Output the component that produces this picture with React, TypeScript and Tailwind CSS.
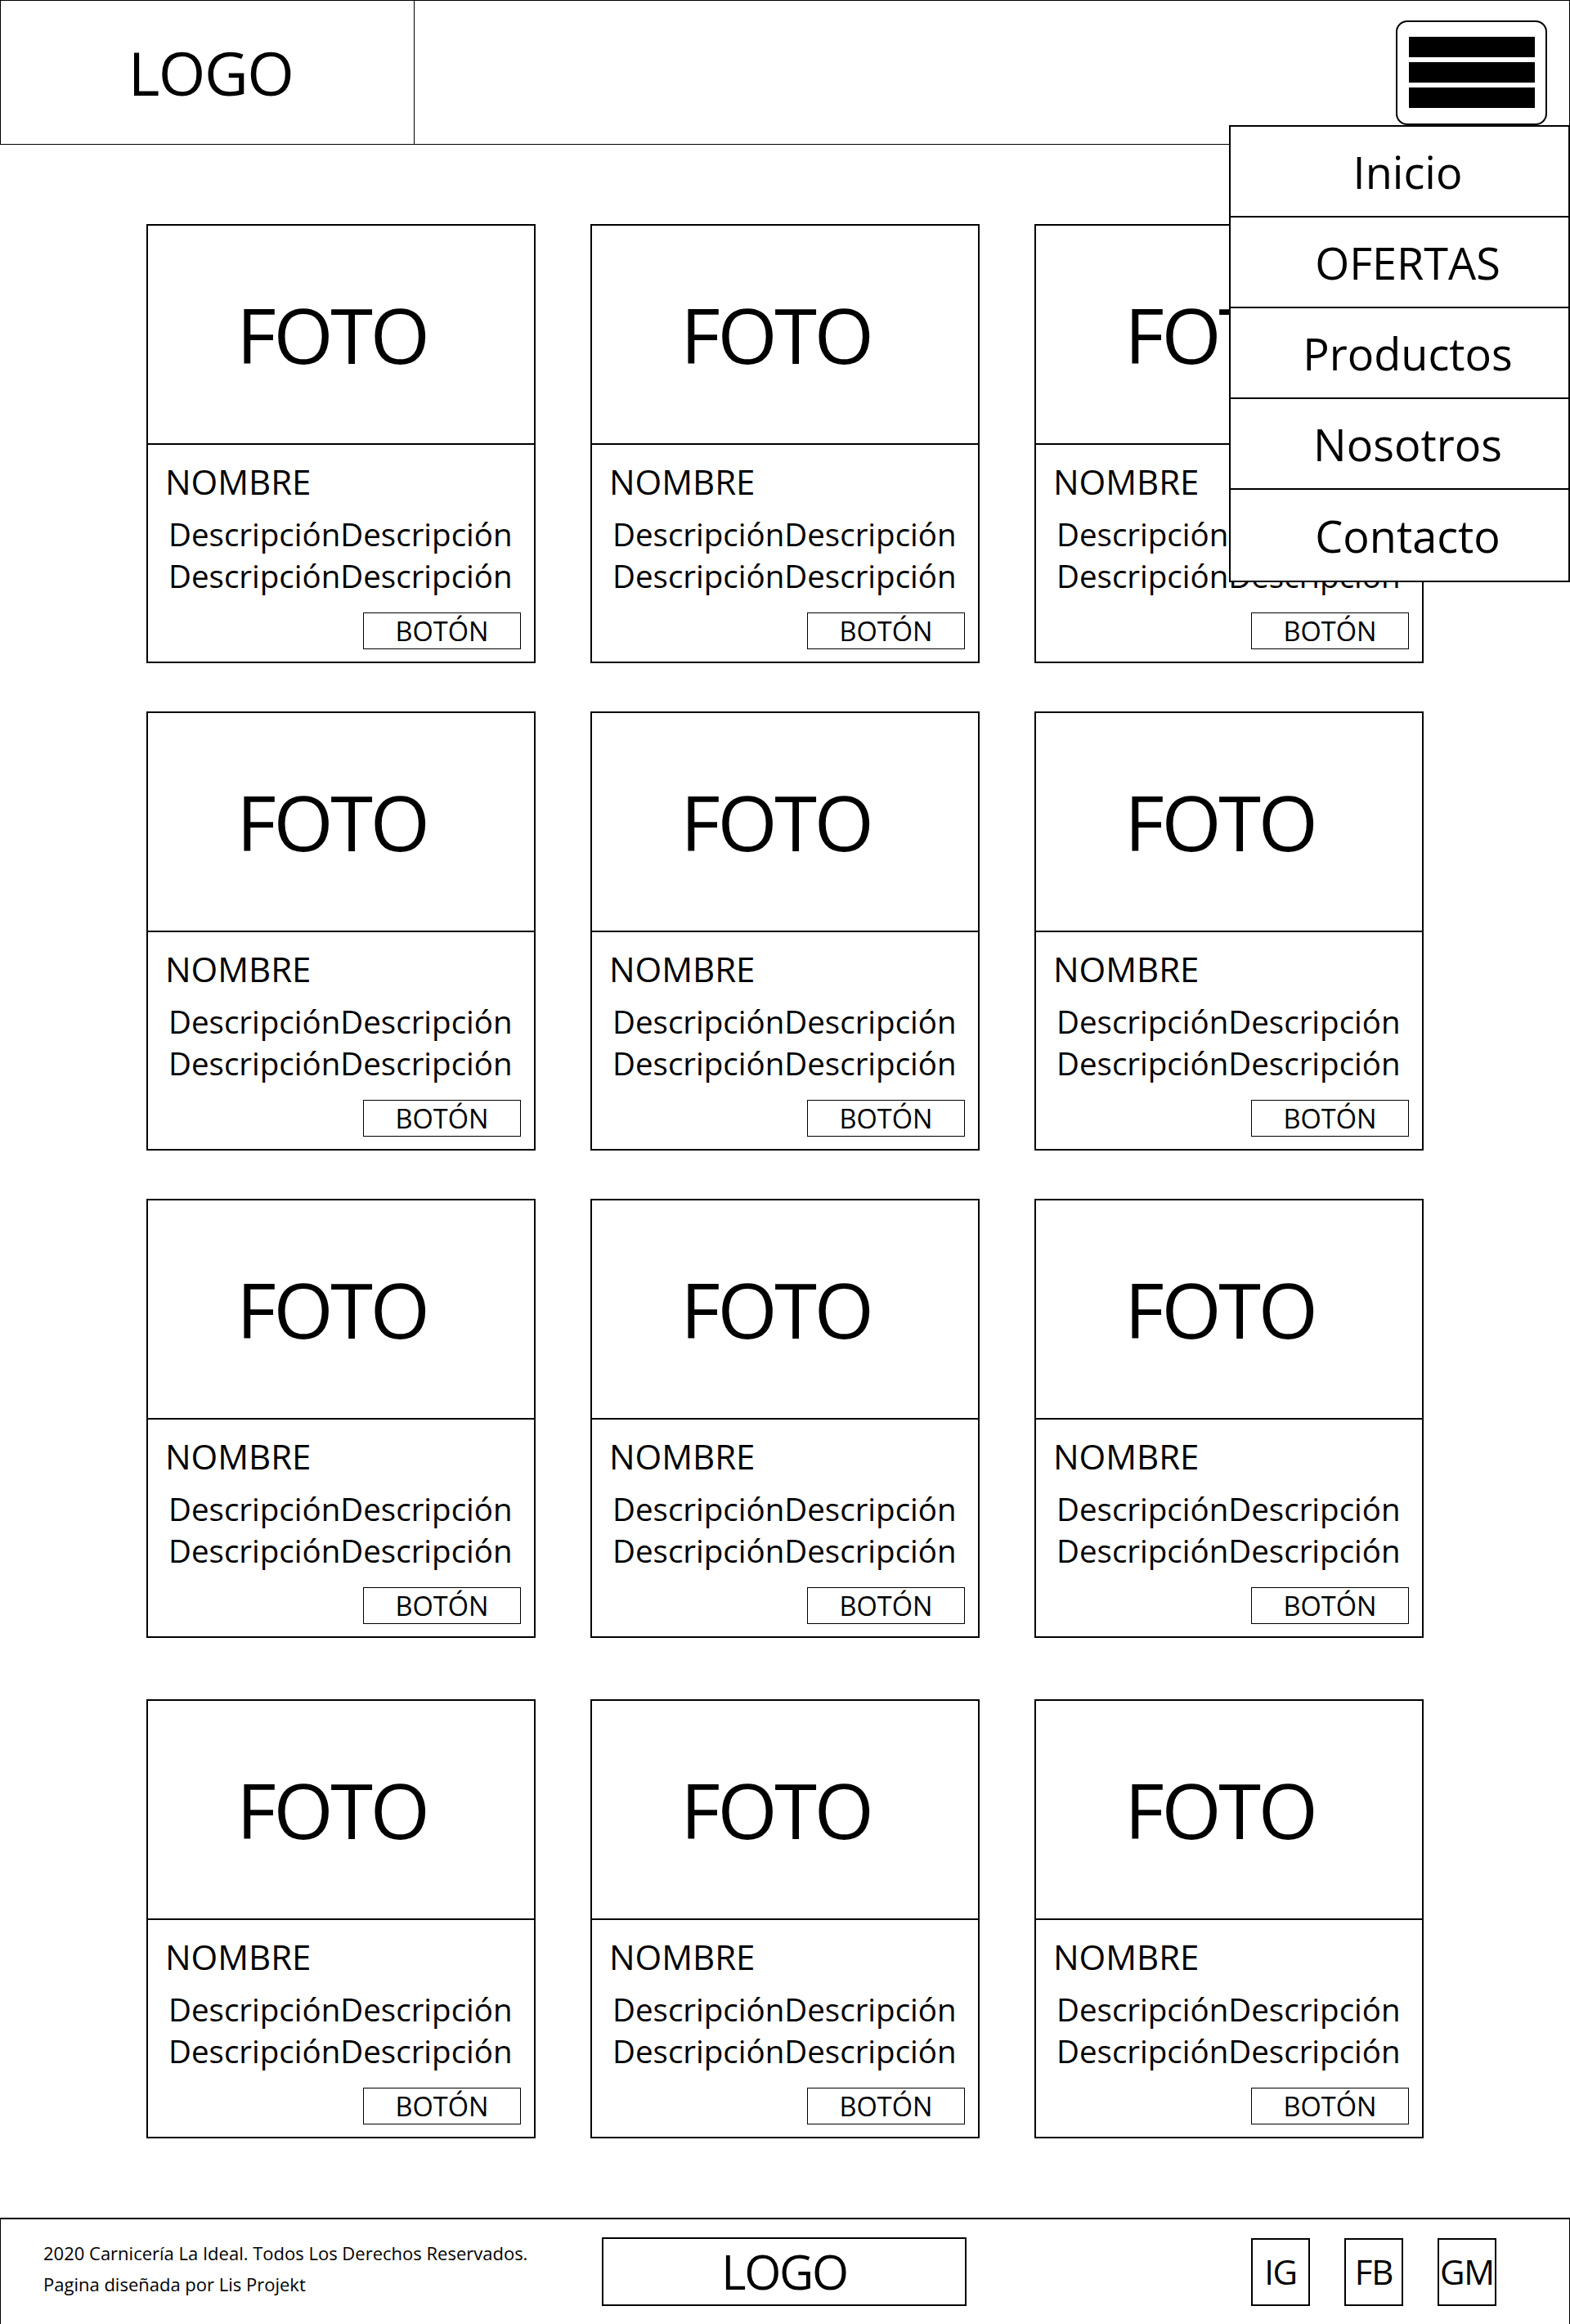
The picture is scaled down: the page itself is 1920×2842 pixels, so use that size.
import React from "react"

const menuItems = ["Inicio", "OFERTAS", "Productos", "Nosotros", "Contacto"]
const rows = [0, 1, 2, 3]
const cols = [0, 1, 2]

function ProductCard() {
  return (
    <div className="flex h-[537px] flex-col border-2 border-black bg-white">
      <div className="flex h-[268px] shrink-0 items-center justify-center border-b-2 border-black pr-[22px]">
        <span className="text-[94px] leading-[110px] tracking-[-0.035em]">FOTO</span>
      </div>
      <div className="flex flex-1 flex-col">
        <div className="pl-[21px] pt-[21px] text-[42px] leading-[48px]">NOMBRE</div>
        <div className="mt-[15px] pl-[25px] text-[38.5px] leading-[51px]">
          <div>DescripciónDescripción</div>
          <div>DescripciónDescripción</div>
        </div>
        <div className="mt-[19px] flex justify-end pr-[16px]">
          <button className="flex h-[45px] w-[193px] items-center justify-center border-[1.5px] border-black text-[32.5px] leading-[40px]">
            BOTÓN
          </button>
        </div>
      </div>
    </div>
  )
}

export default function App() {
  return (
    <div className="w-[1920px] bg-white text-black font-['Open_Sans',sans-serif]">
      <header className="relative flex h-[177px] items-center border border-black">
        <div className="flex h-full w-[506px] items-center justify-center border-r border-black pl-[8px]">
          <span className="text-[74px] leading-[90px] tracking-[-0.02em]">LOGO</span>
        </div>
        <div className="flex-1" />
        <div className="mr-[27px] flex h-[128px] w-[185px] flex-col items-center justify-center gap-[6px] rounded-[14px] border-2 border-black">
          <div className="h-[25px] w-[154px] bg-black" />
          <div className="h-[25px] w-[154px] bg-black" />
          <div className="h-[25px] w-[154px] bg-black" />
        </div>
        <nav className="absolute right-[-1px] top-[152px] z-10 flex w-[417px] flex-col divide-y-2 divide-black border-2 border-black bg-white">
          {menuItems.map((item) => (
            <a key={item} className="flex h-[111px] items-center justify-center pl-[20px] text-[54px] leading-[72px]">
              {item}
            </a>
          ))}
        </nav>
      </header>

      <main className="flex flex-col items-center pb-[97px] pt-[97px]">
        {rows.map((r) => (
          <div
            key={r}
            className={
              r === 0
                ? "grid grid-cols-[476px_476px_476px] gap-x-[67px]"
                : r === 3
                ? "mt-[75px] grid grid-cols-[476px_476px_476px] gap-x-[67px]"
                : "mt-[59px] grid grid-cols-[476px_476px_476px] gap-x-[67px]"
            }
          >
            {cols.map((c) => (
              <ProductCard key={c} />
            ))}
          </div>
        ))}
      </main>

      <footer className="flex h-[130px] items-center border-x border-t-2 border-black">
        <div className="w-[735px] pb-[8px] pl-[52px] text-[22px] leading-[38px]">
          <div>2020 Carnicería La Ideal. Todos Los Derechos Reservados.</div>
          <div>Pagina diseñada por Lis Projekt</div>
        </div>
        <div className="flex h-[84px] w-[446px] items-center justify-center border-2 border-black">
          <span className="text-[58px] leading-[70px] tracking-[-0.04em]">LOGO</span>
        </div>
        <div className="ml-auto mr-[89px] flex gap-[42px]">
          {["IG", "FB", "GM"].map((s) => (
            <div key={s} className="flex h-[83px] w-[72px] items-center justify-center border-2 border-black text-[42px] leading-[56px] tracking-[-0.03em]">
              {s}
            </div>
          ))}
        </div>
      </footer>
    </div>
  )
}
